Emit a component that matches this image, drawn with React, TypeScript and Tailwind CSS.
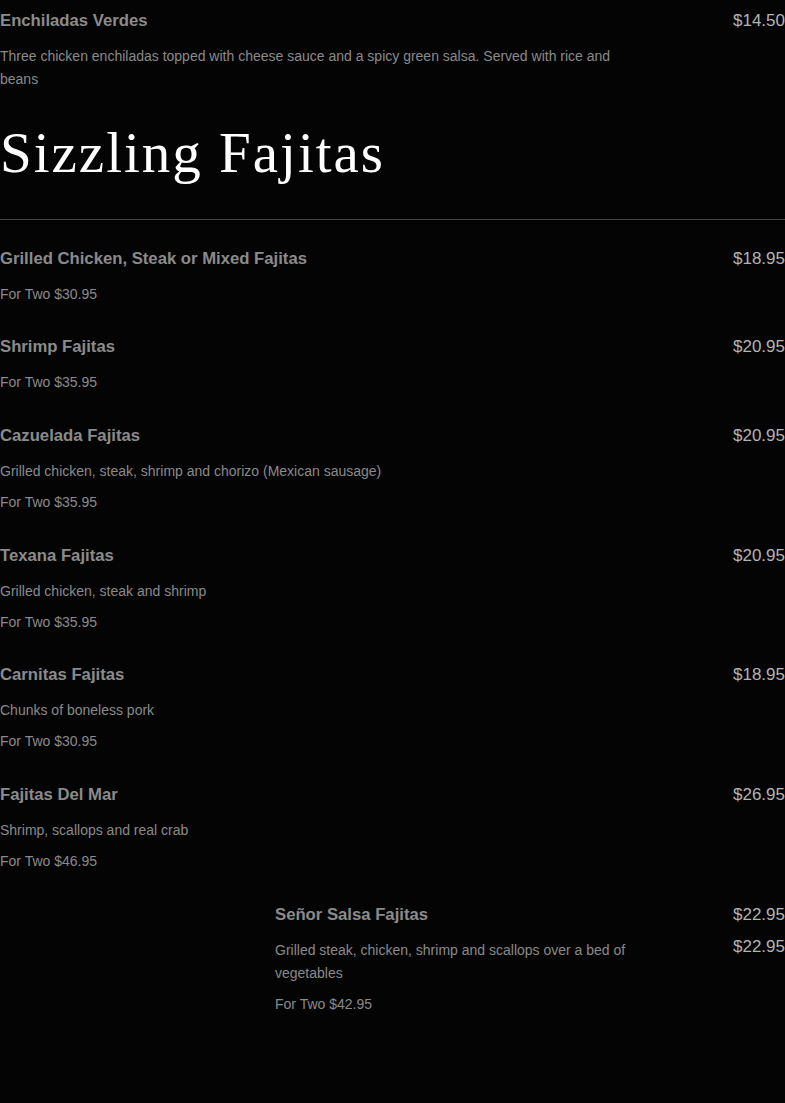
import React from "react";

type Item = { name: string; price: string; lines: string[]; indent?: boolean; double?: boolean };

const fajitas: Item[] = [
  { name: "Grilled Chicken, Steak or Mixed Fajitas", price: "$18.95", lines: ["For Two $30.95"] },
  { name: "Shrimp Fajitas", price: "$20.95", lines: ["For Two $35.95"] },
  { name: "Cazuelada Fajitas", price: "$20.95", lines: ["Grilled chicken, steak, shrimp and chorizo (Mexican sausage)", "For Two $35.95"] },
  { name: "Texana Fajitas", price: "$20.95", lines: ["Grilled chicken, steak and shrimp", "For Two $35.95"] },
  { name: "Carnitas Fajitas", price: "$18.95", lines: ["Chunks of boneless pork", "For Two $30.95"] },
  { name: "Fajitas Del Mar", price: "$26.95", lines: ["Shrimp, scallops and real crab", "For Two $46.95"] },
  {
    name: "Señor Salsa Fajitas",
    price: "$22.95",
    lines: ["Grilled steak, chicken, shrimp and scallops over a bed of vegetables", "For Two $42.95"],
    indent: true,
    double: true,
  },
];

function MenuItem({ item }: { item: Item }) {
  return (
    <div className="flex pt-[9px] pb-[20.7px]">
      <div className={item.indent ? "w-[640px] pl-[275px]" : "w-[640px]"}>
        <div className="text-[16.7px] font-bold leading-6 text-[#8b8b8b]">{item.name}</div>
        <div className="mt-[12px] flex flex-col gap-2">
          {item.lines.map((l, i) => (
            <p key={i} className="text-[14px] leading-[23px] text-[#8a8a8a]">
              {l}
            </p>
          ))}
        </div>
      </div>
      <div className="flex flex-1 flex-col items-end gap-2">
        <div className="text-[17px] leading-6 text-[#b3b3b3]">{item.price}</div>
        {item.double && <div className="text-[17px] leading-6 text-[#b3b3b3]">{item.price}</div>}
      </div>
    </div>
  );
}

export default function App() {
  return (
    <div className="min-h-screen w-full bg-[#040404]" style={{ fontFamily: '"Liberation Sans", Arial, sans-serif' }}>
      <MenuItem
        item={{
          name: "Enchiladas Verdes",
          price: "$14.50",
          lines: ["Three chicken enchiladas topped with cheese sauce and a spicy green salsa. Served with rice and beans"],
        }}
      />
      <h2
        className="mt-[12px] text-[57px] leading-none tracking-[2px] text-white"
        style={{ fontFamily: '"Liberation Serif", "Times New Roman", serif' }}
      >
        Sizzling Fajitas
      </h2>
      <div className="mt-[38px] h-px bg-[#444444]" />
      <div className="pt-[18px]">
        {fajitas.map((it) => (
          <MenuItem key={it.name} item={it} />
        ))}
      </div>
    </div>
  );
}
